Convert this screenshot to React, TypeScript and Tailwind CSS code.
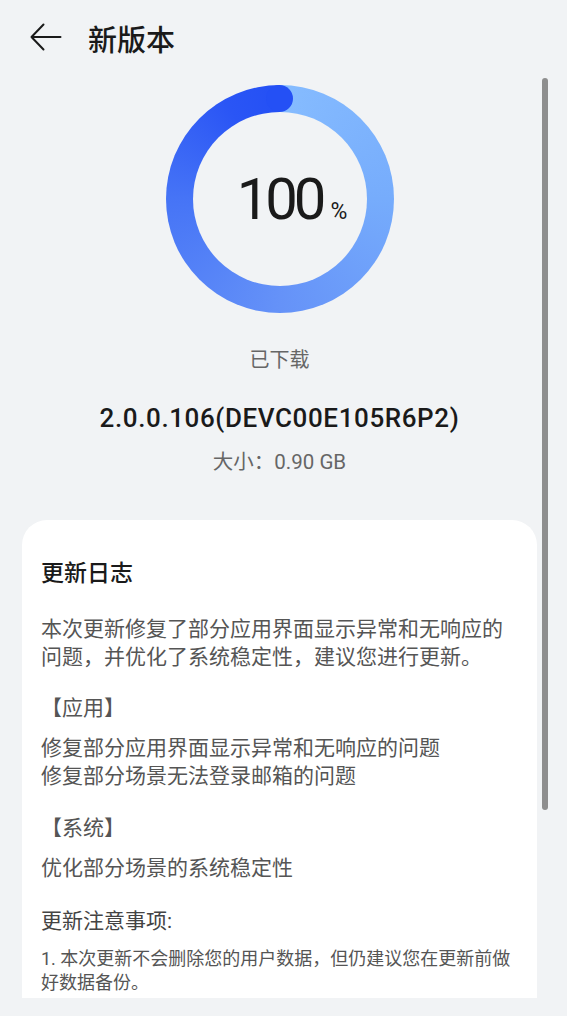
import React from "react";

const font = "font-['Roboto','Noto_Sans_CJK_SC',sans-serif]";

export default function App() {
  return (
    <div className={`relative w-[567px] h-[1016px] overflow-hidden bg-[#f1f3f5] ${font}`}>
      <div className="w-[559px] flex flex-col">
        {/* Header */}
        <div className="h-[76px] flex items-center pl-[30px]">
          <svg width="32" height="30" viewBox="0 0 32 30" className="text-[#1a1a1a] -mt-[3px]">
            <path d="M1.5 15 H30.5 M13.5 2.5 L1.5 15 L13.5 27.5" fill="none" stroke="currentColor" strokeWidth="2" strokeLinecap="round" strokeLinejoin="round" />
          </svg>
          <div className="ml-[26px] text-[29px] leading-[36px] font-medium text-[#1a1a1a] font-['Noto_Sans_CJK_SC',sans-serif]">新版本</div>
        </div>

        {/* Ring */}
        <div className="mt-[9px] self-center relative w-[228px] h-[228px] rounded-full flex items-center justify-center bg-[conic-gradient(#86bcff,#76acfc_25%,#6592f8_50%,#4674f6_75%,#2a55f5_92%,#2450f5)]">
          <div className="absolute left-[100.5px] top-0 w-[27px] h-[27px] rounded-full bg-[#2450f5]" />
          <div className="w-[174px] h-[174px] rounded-full bg-[#f1f3f5] flex items-center justify-center">
            <div className="flex items-baseline text-[#1a1a1a] ml-[25px]">
              <span className="text-[58px] leading-[60px] font-normal tracking-[-4px]">100</span>
              <span className="ml-[8px] text-[23px] leading-[24px]">%</span>
            </div>
          </div>
        </div>

        <div className="mt-[33px] text-center text-[20px] leading-[28px] text-[#666666]">已下载</div>
        <div className="mt-[28px] text-center text-[26px] leading-[32px] font-medium tracking-[0.6px] text-[#1a1a1a]">2.0.0.106(DEVC00E105R6P2)</div>
        <div className="mt-[14px] text-center text-[20.5px] leading-[28px] text-[#666666]">大小：0.90 GB</div>

        {/* Card */}
        <div className="mt-[44px] mx-[22px] h-[478px] bg-white rounded-t-[25px] px-[19px] pt-[39px] flex flex-col">
          <div className="text-[23px] leading-[30px] font-medium text-[#1a1a1a]">更新日志</div>
          <div className="mt-[26px] text-[21px] leading-[28px] text-[#555555]">
            本次更新修复了部分应用界面显示异常和无响应的问题，并优化了系统稳定性，建议您进行更新。
          </div>
          <div className="mt-[23px] text-[21px] leading-[28px] text-[#555555]">【应用】</div>
          <div className="mt-[12px] text-[21px] leading-[28px] text-[#555555]">
            <div>修复部分应用界面显示异常和无响应的问题</div>
            <div>修复部分场景无法登录邮箱的问题</div>
          </div>
          <div className="mt-[24px] text-[21px] leading-[28px] text-[#555555]">【系统】</div>
          <div className="mt-[12px] text-[21px] leading-[28px] text-[#555555]">优化部分场景的系统稳定性</div>
          <div className="mt-[25px] text-[21px] leading-[28px] text-[#444444]">更新注意事项:</div>
          <div className="mt-[12px] text-[18px] leading-[24px] text-[#555555]">
            1. 本次更新不会删除您的用户数据，但仍建议您在更新前做好数据备份。
          </div>
        </div>
      </div>

      {/* Scrollbar */}
      <div className="absolute left-[542px] top-[78px] w-[6px] h-[732px] rounded-full bg-[#8e8e8e]" />
    </div>
  );
}
